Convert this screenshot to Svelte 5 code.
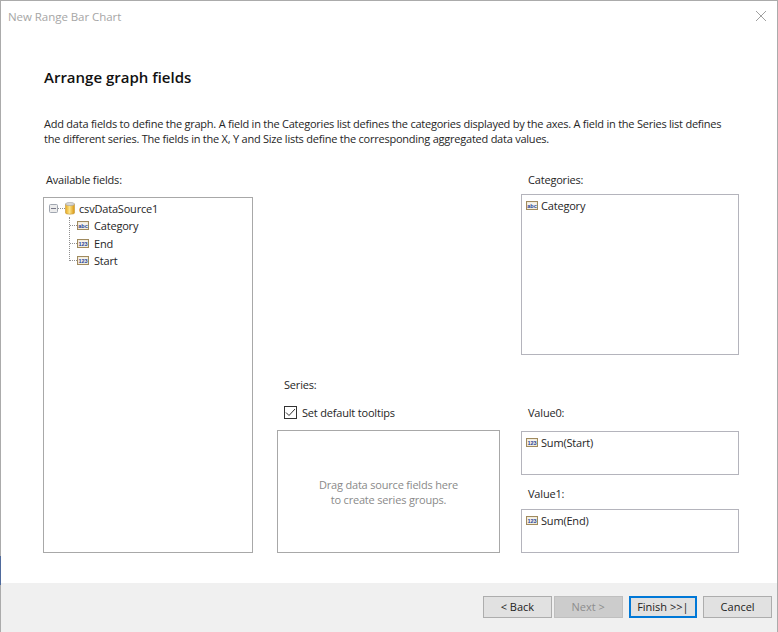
<script>
  const fields = [
    { kind: 'abc', name: 'Category' },
    { kind: '123', name: 'End' },
    { kind: '123', name: 'Start' }
  ];
</script>

{#snippet fieldIcon(kind)}
  <svg class="ficon" width="12" height="9" viewBox="0 0 12 9" aria-hidden="true">
    <rect x="0.5" y="0.5" width="11" height="8" fill="#efe6cf" stroke="#a08a5e" />
    <rect x="1.5" y="1.5" width="9" height="6" fill="#f6f3ec" />
    <text x="6" y="7" text-anchor="middle" class="ficon-text">{kind}</text>
  </svg>
{/snippet}

<div class="window">
  <span class="edge"></span>
  <header class="titlebar">
    <span class="title">New Range Bar Chart</span>
    <svg class="close" width="12" height="12" viewBox="0 0 12 12" aria-hidden="true">
      <path d="M1 1 L11 11 M11 1 L1 11" stroke="#a0a0a0" stroke-width="1" fill="none" />
    </svg>
  </header>

  <main class="content">
    <h1>Arrange graph fields</h1>
    <p class="desc">Add data fields to define the graph. A field in the Categories list defines the categories displayed by the axes. A field in the Series list defines the different series. The fields in the X, Y and Size lists define the corresponding aggregated data values.</p>

    <div class="columns">
      <section class="col">
        <div class="label left-label">Available fields:</div>
        <div class="box tree">
          <div class="tree-root">
            <svg class="expander" width="9" height="9" viewBox="0 0 9 9" aria-hidden="true">
              <rect x="0.5" y="0.5" width="8" height="8" rx="1" fill="#ececec" stroke="#a0a6b0" />
              <path d="M2 4.5 H7" stroke="#778" />
            </svg>
            <span class="dots-h short"></span>
            <svg class="db" width="10" height="13" viewBox="0 0 10 13" aria-hidden="true">
              <defs>
                <linearGradient id="dbg" x1="0" x2="1" y1="0" y2="0">
                  <stop offset="0" stop-color="#e8a81c" />
                  <stop offset="0.45" stop-color="#fbe38a" />
                  <stop offset="1" stop-color="#d9940e" />
                </linearGradient>
              </defs>
              <path d="M0.5 2 V11 C0.5 12.6 9.5 12.6 9.5 11 V2 Z" fill="url(#dbg)" stroke="#c49a3a" stroke-width="0.6" />
              <ellipse cx="5" cy="2" rx="4.5" ry="1.6" fill="#d8d8d8" stroke="#a0a0a0" stroke-width="0.6" />
            </svg>
            <span class="tree-text">csvDataSource1</span>
          </div>
          <ul class="tree-children">
            {#each fields as f}
              <li class="tree-item">
                <span class="dots-h"></span>
                {@render fieldIcon(f.kind)}
                <span class="tree-text">{f.name}</span>
              </li>
            {/each}
          </ul>
        </div>
      </section>

      <section class="col middle">
        <div class="label series-label">Series:</div>
        <label class="check">
          <span class="checkbox">
            <svg width="11" height="11" viewBox="0 0 11 11" aria-hidden="true">
              <path d="M1 5.5 L4 8.5 L10 2" stroke="#333" stroke-width="1" fill="none" />
            </svg>
          </span>
          <span>Set default tooltips</span>
        </label>
        <div class="box series-box">
          <span>Drag data source fields here<br />to create series groups.</span>
        </div>
      </section>

      <section class="col right">
        <div class="label right-label">Categories:</div>
        <div class="box drop categories">
          <div class="drop-item">{@render fieldIcon('abc')}<span>Category</span></div>
        </div>
        <div class="label value0-label">Value0:</div>
        <div class="box drop value">
          <div class="drop-item">{@render fieldIcon('123')}<span>Sum(Start)</span></div>
        </div>
        <div class="label value1-label">Value1:</div>
        <div class="box drop value">
          <div class="drop-item">{@render fieldIcon('123')}<span>Sum(End)</span></div>
        </div>
      </section>
    </div>
  </main>

  <footer class="footer">
    <button class="btn">&lt; Back</button>
    <button class="btn disabled" disabled>Next &gt;</button>
    <button class="btn primary">Finish &gt;&gt;|</button>
    <button class="btn cancel">Cancel</button>
  </footer>
</div>

<style>
  :global(body) {
    margin: 0;
    background: #fff;
  }
  .window {
    position: relative;
    width: 778px;
    height: 632px;
    box-sizing: border-box;
    border: 1px solid #ababab;
    border-bottom: none;
    display: flex;
    flex-direction: column;
    font-family: "Open Sans", "Noto Sans", sans-serif;
    font-size: 11px;
    letter-spacing: -0.19px;
    color: #262626;
    background: #fff;
  }
  .edge {
    position: absolute;
    left: -1px;
    top: 555px;
    width: 1px;
    height: 29px;
    background: #4f6a9c;
  }
  .titlebar {
    height: 28px;
    flex: none;
    display: flex;
    align-items: center;
    justify-content: space-between;
    padding: 2px 10px 0 7px;
    box-sizing: border-box;
  }
  .title {
    font-size: 11.5px;
    letter-spacing: -0.05px;
    color: #a6a6a6;
  }
  .content {
    flex: 1;
    padding: 0 0 0 42px;
    min-height: 0;
  }
  h1 {
    margin: 36px 0 0 1px;
    font-size: 15px;
    line-height: 24px;
    font-weight: 600;
    letter-spacing: 0;
    color: #111;
  }
  .desc {
    margin: 27px 0 0 1px;
    width: 692px;
    line-height: 15px;
    letter-spacing: -0.235px;
  }
  .columns {
    display: grid;
    grid-template-columns: 210px 223px 218px;
    column-gap: 24px;
    margin-top: 26px;
  }
  .col {
    display: flex;
    flex-direction: column;
    height: 381px;
  }
  .right {
    margin-left: -3px;
    width: 218px;
  }
  .label {
    line-height: 15px;
  }
  .left-label {
    margin: 0 0 10px 3px;
  }
  .right-label {
    margin: 0 0 7px 7px;
  }
  .box {
    box-sizing: border-box;
    border: 1px solid #a8a8a8;
    background: #fff;
  }
  .tree {
    flex: 1;
    padding: 2px 4px;
  }
  .tree-root {
    display: flex;
    align-items: center;
    height: 16px;
  }
  .expander {
    flex: none;
    margin-left: 1px;
  }
  .dots-h {
    width: 7px;
    flex: none;
    height: 0;
    border-top: 1px dotted #909090;
  }
  .db {
    flex: none;
    margin: 0 4px 0 0;
  }
  .tree-children {
    list-style: none;
    margin: 1px 0 0 21px;
    padding: 0;
    border-left: 1px dotted #909090;
    height: 44px;
    width: 100px;
  }
  .tree-item {
    display: flex;
    align-items: center;
    height: 17.5px;
  }
  .tree-item .ficon {
    margin-right: 5px;
  }
  .ficon {
    flex: none;
  }
  .ficon-text {
    font-family: "Liberation Sans", sans-serif;
    font-size: 5.5px;
    font-weight: 700;
    letter-spacing: 0;
    fill: #1f3f94;
  }
  .middle {
    justify-content: flex-end;
  }
  .series-label {
    margin-bottom: 12px;
    margin-left: 7px;
  }
  .check {
    display: flex;
    align-items: center;
    gap: 5px;
    margin: 0 0 10px 7px;
    height: 16px;
  }
  .checkbox {
    box-sizing: border-box;
    width: 13px;
    height: 13px;
    border: 1px solid #333;
    display: flex;
    background: #fff;
  }
  .series-box {
    height: 123px;
    display: flex;
    align-items: center;
    justify-content: center;
    text-align: center;
    line-height: 15px;
    color: #8a8a8a;
  }
  .drop {
    padding: 3px 4px;
  }
  .drop-item {
    display: flex;
    align-items: center;
    gap: 3px;
    height: 15px;
  }
  .categories {
    height: 161px;
    border-color: #b4b4bc;
  }
  .value {
    height: 44px;
    border-color: #b4b4bc;
  }
  .value0-label {
    margin: 50px 0 11px 7px;
  }
  .value1-label {
    margin: 11px 0 8px 7px;
  }
  .footer {
    height: 49px;
    flex: none;
    background: #f0f0f0;
    display: flex;
    align-items: flex-start;
    padding: 13px 5px 0 482px;
    box-sizing: border-box;
  }
  .btn {
    box-sizing: border-box;
    width: 69px;
    height: 22px;
    font: inherit;
    letter-spacing: 0;
    color: #222;
    background: #e1e1e1;
    border: 1px solid #adadad;
    padding: 0 0 1px;
    margin-right: 6px;
  }
  .btn:first-child {
    margin-right: 2px;
  }
  .btn.disabled {
    background: #cccccc;
    border-color: #bfbfbf;
    color: #8d8d8d;
  }
  .btn.primary {
    border: 2px solid #0078d7;
    background: #e1e1e1;
  }
  .btn.cancel {
    margin-right: 0;
  }
</style>
